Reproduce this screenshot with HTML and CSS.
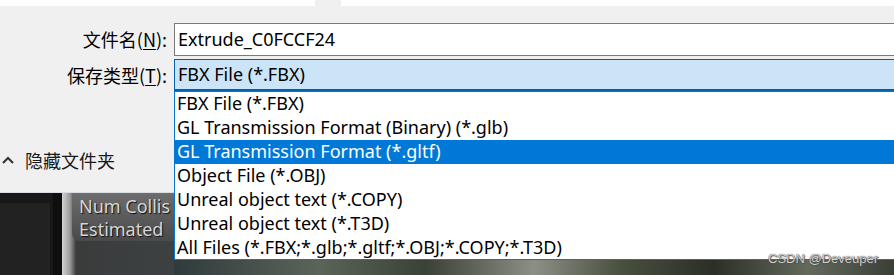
FILE: index.html
```html
<!DOCTYPE html>
<html lang="zh-CN">
<head>
<meta charset="utf-8">
<title>保存</title>
<link rel="stylesheet" href="styles.css">
</head>
<body>
<div class="top-strip">
  <div class="strip-white strip-a"></div>
  <div class="strip-gap"></div>
  <div class="strip-white strip-b"></div>
</div>
<div class="dialog">
  <div class="form">
    <label class="label">文件名(<u>N</u>):</label>
    <div class="input">Extrude_C0FCCF24</div>
    <label class="label">保存类型(<u>T</u>):</label>
    <div class="combo">FBX File (*.FBX)</div>
  </div>
  <div class="footer">
    <svg class="chevron" width="12" height="8" viewBox="0 0 12 8"><polyline points="1,7 6,2 11,7" fill="none" stroke="#333" stroke-width="2"/></svg>
    <span>隐藏文件夹</span>
  </div>
</div>
<div class="backdrop">
  <div class="side">
    <div class="side-panel"></div>
  </div>
  <div class="divider"></div>
  <div class="scene">
    <div class="overlay-box">
      <div>Num Collis</div>
      <div>Estimated</div>
    </div>
  </div>
  <div class="scene-right"></div>
</div>
<ul class="dropdown">
  <li>FBX File (*.FBX)</li>
  <li>GL Transmission Format (Binary) (*.glb)</li>
  <li class="selected">GL Transmission Format (*.gltf)</li>
  <li>Object File (*.OBJ)</li>
  <li>Unreal object text (*.COPY)</li>
  <li>Unreal object text (*.T3D)</li>
  <li>All Files (*.FBX;*.glb;*.gltf;*.OBJ;*.COPY;*.T3D)</li>
</ul>
<div class="watermark">CSDN @Deveuper</div>
</body>
</html>
```

FILE: styles.css
```css
* { box-sizing: border-box; }
html, body {
  margin: 0;
  padding: 0;
}
body {
  width: 894px;
  height: 275px;
  overflow: hidden;
  position: relative;
  background: #151515;
  font-family: "Noto Sans", "Noto Sans CJK SC", sans-serif;
  font-size: 18px;
  color: #000;
}
.top-strip {
  display: flex;
  height: 6px;
  background: #f0f0f0;
}
.strip-white { background: #fff; }
.strip-a { width: 315px; }
.strip-gap { width: 26px; }
.strip-b { flex: 1; }

.dialog {
  height: 187px;
  background: #f0f0f0;
  padding-top: 17px;
  border-bottom: 1px solid #d8dde3;
}
.form {
  display: grid;
  grid-template-columns: 167px 1fr;
  column-gap: 7px;
  row-gap: 3px;
}
.label {
  text-align: right;
  font-family: "Noto Sans CJK SC", sans-serif;
  font-size: 18px;
  line-height: 32px;
  color: #000;
}
.label u { text-decoration-thickness: 1px; text-underline-offset: 2px; }
.input {
  height: 33px;
  border: 1px solid #7a7a7a;
  border-right: none;
  background: #fff;
  padding-left: 3px;
  line-height: 30px;
}
.combo {
  height: 32px;
  border-top: 1px solid #0063b1;
  border-left: 1px solid #0063b1;
  border-bottom: 2px solid #0063b1;
  background: #cce4f7;
  padding-left: 3px;
  line-height: 29px;
}
.footer {
  display: flex;
  align-items: center;
  height: 24px;
  margin-top: 57px;
  padding-left: 2px;
  gap: 11px;
  font-family: "Noto Sans CJK SC", sans-serif;
  font-size: 18px;
  color: #1a1a1a;
}
.chevron { display: block; }

.backdrop {
  display: flex;
  height: 82px;
}
.side {
  width: 53px;
  background: #181818;
  padding-top: 10px;
}
.side-panel {
  height: 100%;
  width: 50px;
  background: #222;
}
.divider {
  width: 9px;
  background: #0e0e0e;
}
.scene {
  width: 112px;
  background:
    linear-gradient(90deg, #d4d4d4 0, #9a9a9a 8px, #3a3c3c 14px, #3d4142 100%);
  padding: 0 0 0 10px;
}
.overlay-box {
  height: 48px;
  background: linear-gradient(180deg, #6d6d6d 0, #4a4a4a 100%);
  border-radius: 0 0 0 8px;
  padding: 2px 0 0 7px;
  color: #d6d6d6;
  font-family: "Noto Sans", sans-serif;
  font-size: 18px;
  line-height: 23px;
  text-shadow: 1px 1px 1px #111;
  white-space: nowrap;
  overflow: hidden;
}
.scene-right {
  flex: 1;
  background:
    linear-gradient(90deg, #2f3a3c 0, #5b6459 20%, #3a4136 35%, #8c8f86 50%, #48503f 62%, #2b2f27 75%, #636a5c 88%, #3a3f36 100%);
}

.dropdown {
  position: absolute;
  left: 174px;
  top: 91px;
  width: 730px;
  height: 169px;
  margin: 0;
  padding: 0;
  list-style: none;
  background: #fff;
  border: 1px solid #0078d7;
}
.dropdown li {
  height: 24px;
  line-height: 23px;
  padding-left: 2px;
  white-space: nowrap;
}
.dropdown li.selected {
  background: #0078d7;
  color: #fff;
}
.watermark {
  position: absolute;
  left: 768px;
  top: 251px;
  font-family: "Liberation Sans", sans-serif;
  font-size: 13px;
  color: #d0d0d0;
  text-shadow: 0 0 1px #333, 1px 1px 1px #555;
}
```
